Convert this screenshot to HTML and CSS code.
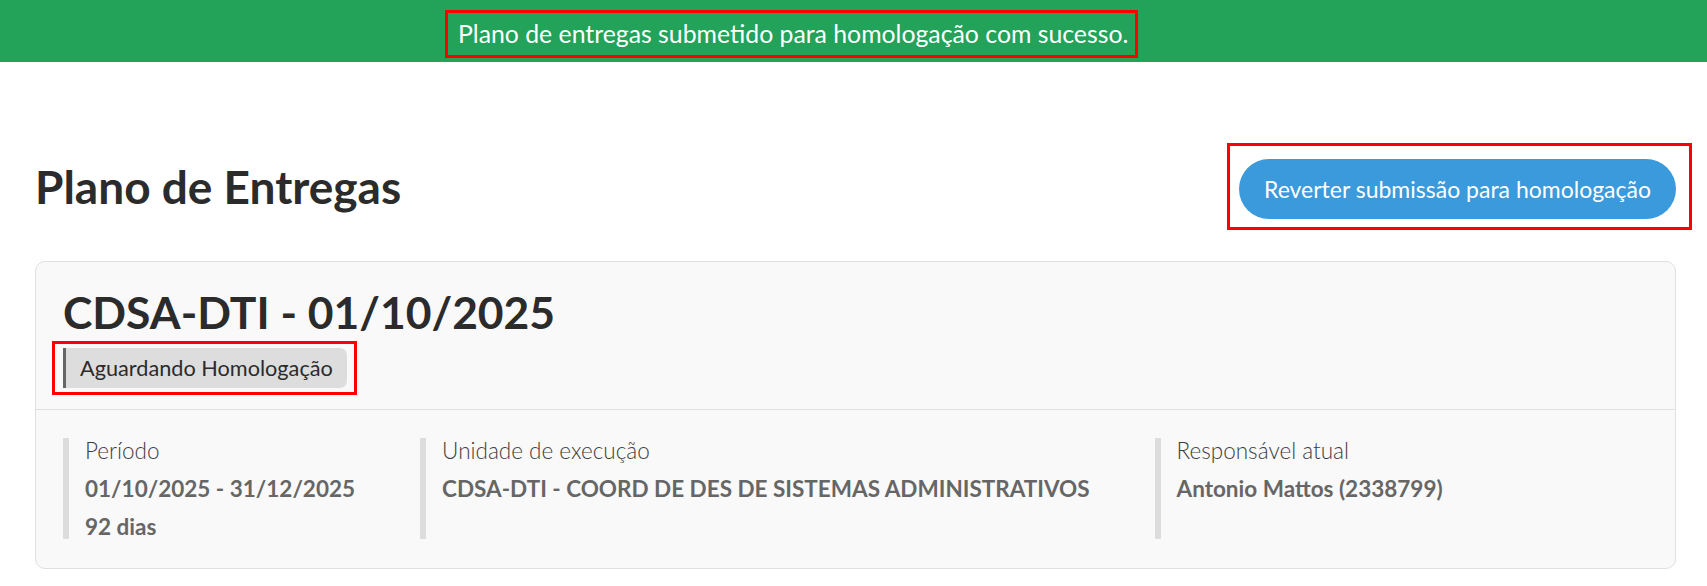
FILE: index.html
```html
<!DOCTYPE html>
<html lang="pt-BR">
<head>
<meta charset="utf-8">
<title>Plano de Entregas</title>
<link rel="stylesheet" href="styles.css">
</head>
<body>
  <div class="toast-bar">
    <div class="toast-msg highlight">Plano de entregas submetido para homologação com sucesso.</div>
  </div>
  <main class="page">
    <div class="page-head">
      <h1 class="page-title">Plano de Entregas</h1>
      <div class="action-wrap highlight">
        <button class="btn-primary" type="button">Reverter submissão para homologação</button>
      </div>
    </div>
    <section class="card">
      <header class="card-head">
        <h2 class="card-title">CDSA-DTI - 01/10/2025</h2>
        <div class="status-wrap highlight">
          <span class="status">Aguardando Homologação</span>
        </div>
      </header>
      <div class="card-body">
        <div class="field">
          <div class="field-label">Período</div>
          <div class="field-value">01/10/2025 - 31/12/2025</div>
          <div class="field-value extra">92 dias</div>
        </div>
        <div class="field">
          <div class="field-label">Unidade de execução</div>
          <div class="field-value">CDSA-DTI - COORD DE DES DE SISTEMAS ADMINISTRATIVOS</div>
        </div>
        <div class="field">
          <div class="field-label">Responsável atual</div>
          <div class="field-value">Antonio Mattos (2338799)</div>
        </div>
      </div>
    </section>
  </main>
</body>
</html>
```

FILE: styles.css
```css
* { box-sizing: border-box; }
html, body { margin: 0; padding: 0; background: #fff; }
body {
  font-family: Lato, "Open Sans", "Liberation Sans", sans-serif;
  color: #2b2b2b;
}
.highlight { outline: 3px solid #ff0000; }

.toast-bar {
  background: #23a25a;
  height: 62px;
  padding: 10px 0 0 445px;
}
.toast-msg {
  display: inline-block;
  color: #fff;
  font-size: 24.8px;
  line-height: 30px;
  height: 48px;
  padding: 9px 10px 9px 13px;
  outline-offset: -3px;
}

.page { padding: 0 31px 0 35px; }
.page-head {
  display: flex;
  align-items: center;
  justify-content: space-between;
  margin-top: 82px;
  height: 85px;
}
.page-title {
  margin: 0;
  font-size: 46px;
  font-weight: 700;
  line-height: 1.2;
}
.action-wrap {
  padding: 16px 16px 11px 12px;
  margin-right: -16px;
  outline-offset: -3px;
}
.btn-primary {
  display: block;
  height: 60px;
  padding: 0 25px;
  border: 0;
  border-radius: 30px;
  background: #3a9adb;
  color: #fff;
  font-family: inherit;
  font-size: 23px;
}

.card {
  margin-top: 32px;
  background: #f9f9f9;
  border: 1px solid #e0e0e0;
  border-radius: 10px;
}
.card-head {
  padding: 23px 27px 14px;
  border-bottom: 1px solid #e0e0e0;
}
.card-title {
  margin: 0;
  font-size: 44.4px;
  font-weight: 700;
  line-height: 1.2;
}
.status-wrap {
  display: inline-block;
  margin: 3px 0 0 -11px;
  padding: 7px 10px 7px 11px;
  outline-offset: -3px;
}
.status {
  display: block;
  height: 40px;
  line-height: 40px;
  padding: 0 14px 0 14px;
  background: #dddddd;
  border-left: 3px solid #666;
  border-radius: 0 7px 7px 0;
  font-size: 21.7px;
  color: #2b2b2b;
}

.card-body {
  display: flex;
  gap: 65px;
  padding: 28px 27px 29px;
}
.field {
  border-left: 6px solid #dddddd;
  padding-left: 16px;
  height: 101px;
}
.field-label {
  font-size: 22.5px;
  font-weight: 300;
  line-height: 26px;
  color: #3d3d3d;
}
.field-value {
  font-size: 22.5px;
  font-weight: 700;
  line-height: 38px;
  color: #666;
  margin-top: 6px;
}
.field-value.extra { margin-top: 0; }
```
